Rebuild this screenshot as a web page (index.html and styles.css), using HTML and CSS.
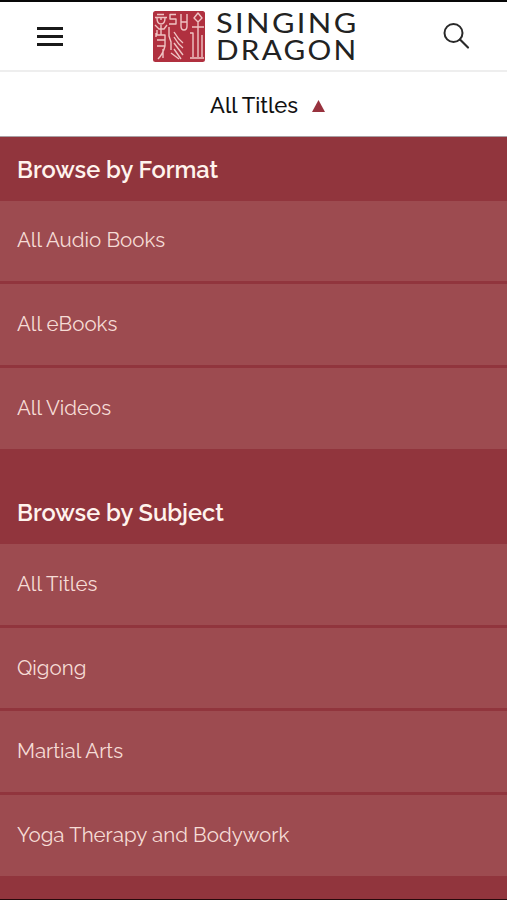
FILE: index.html
```html
<!DOCTYPE html>
<html lang="en">
<head>
<meta charset="utf-8">
<title>Singing Dragon</title>
<link rel="stylesheet" href="styles.css">
</head>
<body>
<header class="topbar">
  <svg class="menu-icon" width="28" height="22" viewBox="0 0 28 22"><path d="M1 3.500H27M1 11.500H27M1 19.500H27" stroke="#191919" stroke-width="2.800"/></svg>
  <svg class="logo" width="206" height="54" viewBox="0 0 206 54">
    <rect x="1" y="1" width="52" height="51" rx="2.500" fill="#b0303f"/>
    <g fill="none" stroke="#efc3c3" stroke-width="1.400" stroke-linejoin="round">
      <path d="M5 4.500H12M3 7.500H15M5 8Q5 14 9 14Q13 14 13 8M9 8V10M3 15L7 19H12L15 15M9 15V25M5 20V25H13V36H5M5 30H13M4 23V27M13 36Q11 44 6 49M11 39V48"/>
      <path d="M24 4.500H18V9H24V14H17M17 17V26L19 32V40M19 43L27 49M22 22Q26 29 31 33M22 27Q26 34 31 38M22 33L31 45M22 39L29 49"/>
      <path d="M29 4V16Q29 20 32 20Q35 20 35 16V4M29 12H35"/>
      <path d="M46 3L50 8L46 12L42 8ZM46 12V47M40 17H52M38 23H41V47M50 25V47M38 48H52"/>
    </g>
    <text class="logo-text" x="64" y="23" textLength="142.500" lengthAdjust="spacingAndGlyphs">SINGING</text>
    <text class="logo-text" x="64" y="49.700" textLength="142.500" lengthAdjust="spacingAndGlyphs">DRAGON</text>
  </svg>
  <svg class="search-icon" width="28" height="28" viewBox="0 0 28 28" fill="none" stroke="#292929"><circle cx="10.500" cy="11" r="9" stroke-width="2"/><path d="M17 17.500L25 25.500" stroke-width="2.200" stroke-linecap="round"/></svg>
</header>
<div class="selector"><span>All Titles</span><svg width="13" height="12" viewBox="0 0 13 12"><path d="M6.500 0L13 12H0Z" fill="#98323e"/></svg></div>
<main class="browse">
  <h2>Browse by Format</h2>
  <ul>
    <li>All Audio Books</li>
    <li>All eBooks</li>
    <li>All Videos</li>
  </ul>
  <h2 class="subject">Browse by Subject</h2>
  <ul>
    <li>All Titles</li>
    <li>Qigong</li>
    <li>Martial Arts</li>
    <li>Yoga Therapy and Bodywork</li>
  </ul>
</main>
</body>
</html>
```
FILE: styles.css
```css
* { box-sizing: border-box; }
body { margin: 0; height: 900px; overflow: hidden; background: #fff; font-family: Raleway, Lato, sans-serif; border-top: 2px solid #080808; }
.topbar { height: 70px; display: flex; align-items: flex-start; border-bottom: 2px solid #eee; }
.menu-icon { margin: 23px 0 0 36px; }
.logo { margin: 8px 0 0 88px; overflow: visible; }
.logo-text { font-family: Lato, sans-serif; font-size: 26px; letter-spacing: 2px; fill: #222; }
.search-icon { margin: 20px 0 0 85px; }
.selector { height: 65px; display: flex; align-items: center; gap: 14px; padding: 2px 0 0 210px; font-size: 22px; font-weight: 500; color: #111; border-bottom: 1px solid #aaa0a5; white-space: nowrap; }
.selector svg { margin-top: 2px; }
.browse { height: 763px; background: #91353d; border-bottom: 1px solid #26090c; }
h2 { margin: 0; height: 63.600px; display: flex; align-items: center; padding: 2px 0 0 17px; font-size: 23.600px; font-weight: 600; color: #fff3ed; white-space: nowrap; }
.subject { height: 95.500px; padding-top: 34px; }
ul { list-style: none; margin: 0; padding: 0; display: grid; grid-auto-rows: 80.600px; gap: 3.100px; }
li { display: flex; align-items: center; padding: 0 0 1px 17px; background: #9d4b50; color: #f6dcd6; font-size: 20.500px; white-space: nowrap; }
```
